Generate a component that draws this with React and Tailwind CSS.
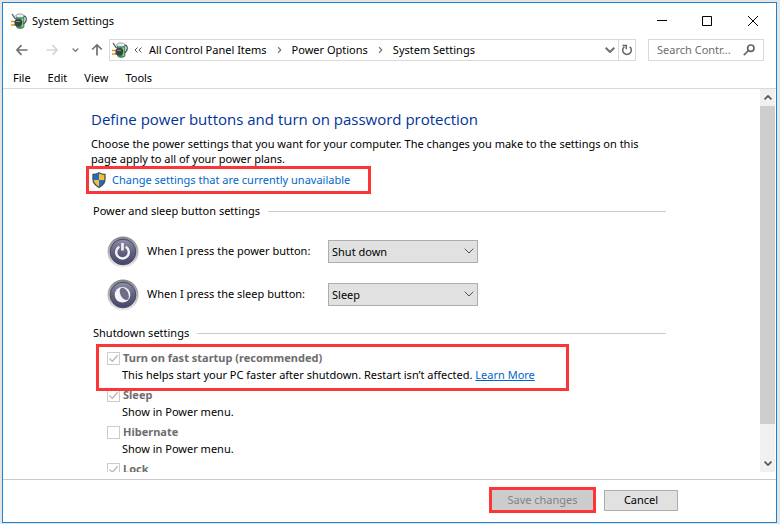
import { useState } from "react";

const menus = ["File", "Edit", "View", "Tools"];
const crumbs = ["All Control Panel Items", "Power Options", "System Settings"];
const actions = ["Do nothing", "Sleep", "Hibernate", "Shut down"];

const shutdownOptions = [
  {
    id: "fast-startup",
    label: "Turn on fast startup (recommended)",
    text: "This helps start your PC faster after shutdown. Restart isn’t affected.",
    checked: true,
    link: "Learn More",
    marked: true,
  },
  { id: "sleep", label: "Sleep", text: "Show in Power menu.", checked: true },
  { id: "hibernate", label: "Hibernate", text: "Show in Power menu.", checked: false },
  { id: "lock", label: "Lock", checked: true },
];

function PowerPlugIcon() {
  return (
    <svg viewBox="0 0 16 16" className="h-4 w-4 shrink-0" aria-hidden="true">
      <path d="M5.500 3v10.500c0 2.500 7.500 2.500 7.500 0V3z" fill="#2fa344" stroke="#4c5660" strokeWidth=".7" />
      <path d="M10.500 5.500h1.800v8l-1.800 1z" fill="#7be077" />
      <path d="M4.500 3.200C5 .2 12.500 .2 13.300 3.200 12.500 5 5.500 5 4.500 3.200z" fill="#e9eef8" stroke="#7c8699" strokeWidth=".8" />
      <path d="M12.800 3.200c3.600-.2 3.200 5.800-.3 7.600" fill="none" stroke="#4a5058" strokeWidth="1.200" />
      <path d="M.8 1.200c1.600.6 1.800 4 4.400 5" fill="none" stroke="#59616b" strokeWidth="1.300" />
      <path d="M0 8.500h4M0 12h4" stroke="#d99a13" strokeWidth="1.500" />
      <path d="M3.500 8L5.500 6.300h4l1.700 2v3L9.200 13.400H5.500L3.500 12z" fill="#3c4047" />
      <path d="M5 8.500h4" stroke="#858b94" />
    </svg>
  );
}

function ArrowIcon({ className }) {
  return (
    <svg viewBox="0 0 12 12" className={className} fill="none" stroke="currentColor" strokeWidth="1.700" aria-hidden="true">
      <path d="M11.500 6H1M5.500 1.200L.9 6l4.600 4.800" />
    </svg>
  );
}

function Chevron({ className }) {
  return (
    <svg viewBox="0 0 10 6" className={className} fill="none" stroke="currentColor" aria-hidden="true">
      <path d="M.7 .7L5 5 9.300 .7" />
    </svg>
  );
}

function ShieldIcon() {
  return (
    <svg viewBox="0 0 14 16" className="h-4 w-3.5 shrink-0" aria-hidden="true">
      <clipPath id="shield">
        <path d="M7 .8C5.200 2 3 2.500 1 2.500V7c0 4 3 6.800 6 8.300C10 13.800 13 11 13 7V2.500C11 2.500 8.800 2 7 .8z" />
      </clipPath>
      <g clipPath="url(#shield)">
        <path d="M0 0h7v8H0z" fill="#1a6fc9" />
        <path d="M7 0h7v8H7z" fill="#fdbd2e" />
        <path d="M0 8h7v8H0z" fill="#fdbd2e" />
        <path d="M7 8h7v8H7z" fill="#1a6fc9" />
      </g>
      <path
        d="M7 .8C5.200 2 3 2.500 1 2.500V7c0 4 3 6.800 6 8.300C10 13.800 13 11 13 7V2.500C11 2.500 8.800 2 7 .8z"
        fill="none"
        stroke="#44505c"
        strokeWidth="1.300"
      />
    </svg>
  );
}

function RoundIcon({ type }) {
  return (
    <svg viewBox="0 0 32 32" className="h-8 w-8 shrink-0" aria-hidden="true">
      <defs>
        <linearGradient id={`${type}-rim`} x2="0" y2="1">
          <stop offset="0" stopColor="#85858a" />
          <stop offset=".5" stopColor="#b4b4b7" />
          <stop offset="1" stopColor="#ececec" />
        </linearGradient>
        <linearGradient id={`${type}-face`} x2="0" y2="1">
          <stop offset="0" stopColor="#8f8fa8" />
          <stop offset=".5" stopColor="#62627f" />
          <stop offset="1" stopColor="#45456a" />
        </linearGradient>
      </defs>
      <circle cx="16" cy="16" r="15.500" fill={`url(#${type}-rim)`} />
      <circle cx="16" cy="16" r="12.800" fill={`url(#${type}-face)`} stroke="#48486a" strokeWidth="1" />
      {type === "power" ? (
        <g fill="none" stroke="#f4f4f8">
          <path d="M12.300 10.800a6.300 6.300 0 1 0 6.400 0" strokeWidth="2.400" />
          <path d="M15.500 7v7.500" strokeWidth="2.600" />
        </g>
      ) : (
        <g>
          <circle cx="15.500" cy="15.800" r="7.800" fill="#f4f4f8" />
          <ellipse cx="17.300" cy="14.900" rx="3.900" ry="6.600" fill="#6d6d88" transform="rotate(-28 17.300 14.900)" />
        </g>
      )}
    </svg>
  );
}

function SectionTitle({ children }) {
  return (
    <div className="ml-0.5 flex h-5 items-center gap-2">
      <h2>{children}</h2>
      <span className="h-px flex-1 bg-[#cbcbcb]" />
    </div>
  );
}

function ButtonSetting({ type, label, initial }) {
  const [value, setValue] = useState(initial);

  return (
    <div className="ml-4 flex h-[43px] items-center">
      <RoundIcon type={type} />
      <label htmlFor={type} className="ml-2 w-[181px] whitespace-nowrap">
        {label}
      </label>
      <div className="relative">
        <select
          id={type}
          value={value}
          onChange={(e) => setValue(e.target.value)}
          className="block h-[23px] w-[150px] appearance-none border border-[#adadad] bg-[#e1e1e1] pl-[3px] leading-5"
        >
          {actions.map((action) => (
            <option key={action}>{action}</option>
          ))}
        </select>
        <Chevron className="pointer-events-none absolute right-1 top-2 h-1.5 w-2.5 text-[#505050]" />
      </div>
    </div>
  );
}

function ShutdownOption({ id, label, text, checked, link, marked }) {
  return (
    <li className="relative h-[37px] pl-4">
      <div className="flex h-5 items-center gap-[3px]">
        <span className="grid h-[13px] w-[13px] place-items-center">
          <input
            id={id}
            type="checkbox"
            defaultChecked={checked}
            disabled
            className="col-start-1 row-start-1 h-[13px] w-[13px] appearance-none border border-[#cccccc] bg-white"
          />
          {checked && (
            <svg viewBox="0 0 11 11" className="col-start-1 row-start-1 h-[11px] w-[11px]" aria-hidden="true">
              <path d="M1.500 5.500l2.800 2.800 5.400-6" fill="none" stroke="#b8b8b8" strokeWidth="1.300" />
            </svg>
          )}
        </span>
        <label htmlFor={id} className="font-bold text-[#6d6d6d]">
          {label}
        </label>
      </div>
      {text && (
        <p className="ml-[15px] whitespace-nowrap leading-[13px]">
          {text}{" "}
          {link && (
            <a href="#learn-more" className="text-[#0066cc] underline">
              {link}
            </a>
          )}
        </p>
      )}
      {marked && (
        <span className="pointer-events-none absolute -bottom-1.5 -top-1 left-[5px] z-10 w-[473px] border-3 border-[#fb3538]" />
      )}
    </li>
  );
}

function TitleBar() {
  return (
    <header className="flex h-9 items-center pl-2">
      <PowerPlugIcon />
      <h1 className="ml-[5px] flex-1">System Settings</h1>
      <div className="flex">
        <button aria-label="Minimize" className="grid h-7 w-[45px] place-items-center">
          <svg viewBox="0 0 10 10" className="h-2.5 w-2.5" stroke="#000">
            <path d="M0 4.500h10" />
          </svg>
        </button>
        <button aria-label="Maximize" className="grid h-7 w-[45px] place-items-center">
          <svg viewBox="0 0 10 10" className="h-2.5 w-2.5" fill="none" stroke="#000">
            <path d="M.5 .5h9v9h-9z" />
          </svg>
        </button>
        <button aria-label="Close" className="grid h-7 w-[47px] place-items-center">
          <svg viewBox="0 0 10 10" className="h-2.5 w-2.5" stroke="#000">
            <path d="M0 0l10 10M10 0L0 10" />
          </svg>
        </button>
      </div>
    </header>
  );
}

function AddressBar() {
  return (
    <div className="flex h-[22px] items-center pl-[13px] pr-3">
      <button aria-label="Back" className="text-[#707070]">
        <ArrowIcon className="h-3 w-3" />
      </button>
      <button aria-label="Forward" className="ml-[18px] text-[#d5d5d5]">
        <ArrowIcon className="h-3 w-3 rotate-180" />
      </button>
      <button aria-label="Recent locations" className="ml-[14px] text-[#808080]">
        <Chevron className="h-1 w-[7px] stroke-2" />
      </button>
      <button aria-label="Up" className="ml-3 text-[#707070]">
        <ArrowIcon className="h-3 w-3 rotate-90" />
      </button>
      <nav className="ml-1.5 flex h-full flex-1 items-center border border-[#d9d9d9] pl-0.5">
        <PowerPlugIcon />
        <svg viewBox="0 0 8 6" className="ml-1.5 h-1.5 w-2" fill="none" stroke="#555" aria-hidden="true">
          <path d="M3.500 .5L1 3l2.500 2.500M7.500 .5L5 3l2.500 2.500" />
        </svg>
        <ol className="ml-[7px] flex flex-1 items-center">
          {crumbs.map((crumb, i) => (
            <li key={crumb} className="flex items-center">
              {i > 0 && <Chevron className="mx-[9px] h-1 w-[7px] -rotate-90 stroke-2 text-[#777]" />}
              <a href="#crumb" className="whitespace-nowrap">
                {crumb}
              </a>
            </li>
          ))}
        </ol>
        <button aria-label="Previous locations" className="mr-[3px] text-[#707070]">
          <Chevron className="h-1.5 w-2.5 stroke-2" />
        </button>
        <button aria-label="Refresh" className="grid h-full w-[17px] place-items-center border-l border-[#d9d9d9]">
          <svg viewBox="0 0 12 12" className="h-3 w-3" fill="none" stroke="#666" strokeWidth="1.500">
            <path d="M3.300 2.800a4.300 4.300 0 1 0 5.400 0" />
            <path d="M1.500 1.500h3.800v3.800" />
          </svg>
        </button>
      </nav>
      <div className="ml-3 flex h-full w-[116px] items-center border border-[#d9d9d9] pl-2 pr-2">
        <input
          type="text"
          aria-label="Search Control Panel"
          placeholder="Search Contr..."
          className="min-w-0 flex-1 bg-transparent outline-none placeholder:text-[#6d6d6d]"
        />
        <svg viewBox="0 0 12 12" className="h-3 w-3 shrink-0" fill="none" stroke="#666" strokeWidth="1.700" aria-hidden="true">
          <circle cx="7.800" cy="4.200" r="3.200" />
          <path d="M5.500 6.500L.8 11.200" />
        </svg>
      </div>
    </div>
  );
}

function ScrollBar() {
  return (
    <div className="mr-px flex w-[15px] shrink-0 flex-col bg-[#f0f0f0] text-[#505050]">
      <button aria-label="Scroll up" className="grid h-[17px] place-items-center">
        <Chevron className="h-[5px] w-2 rotate-180 stroke-2" />
      </button>
      <div className="flex-1">
        <div className="h-[91%] bg-[#cdcdcd]" />
      </div>
      <button aria-label="Scroll down" className="grid h-[17px] place-items-center">
        <Chevron className="h-[5px] w-2 stroke-2" />
      </button>
    </div>
  );
}

export default function App() {
  return (
    <div className="flex h-screen flex-col bg-[#e4e4e4] pb-px pl-0.5 pr-[3px] pt-0.5 font-['Noto_Sans',sans-serif] text-[11px] text-black">
      <div className="flex min-h-0 flex-1 flex-col border border-[#1883d7] bg-white">
        <TitleBar />
        <AddressBar />
        <nav className="flex h-[28px] shrink-0 items-center gap-[17px] border-b border-[#d9d9d9] pl-2.5 pt-2">
          {menus.map((menu) => (
            <button key={menu}>{menu}</button>
          ))}
        </nav>

        <div className="mb-[7px] flex min-h-0 flex-1">
          <main className="flex-1 overflow-hidden pl-[88px] pr-[94px] pt-[18px]">
            <h2 className="font-['Open_Sans',sans-serif] text-[15px] leading-6 text-[#003399]">
              Define power buttons and turn on password protection
            </h2>
            <p className="mt-[5px] leading-[15px]">
              Choose the power settings that you want for your computer. The changes you make to the settings on this
              page apply to all of your power plans.
            </p>
            <div className="-ml-[5px] flex h-7 w-[285px] items-center gap-1.5 border-3 border-[#fb3538] pl-[3px]">
              <ShieldIcon />
              <a href="#unavailable" className="whitespace-nowrap text-[#0066cc]">
                Change settings that are currently unavailable
              </a>
            </div>

            <section className="mt-[7px]">
              <SectionTitle>Power and sleep button settings</SectionTitle>
              <div className="mt-[9px]">
                <ButtonSetting type="power" label="When I press the power button:" initial="Shut down" />
                <ButtonSetting type="sleep-button" label="When I press the sleep button:" initial="Sleep" />
              </div>
            </section>

            <section className="mt-[7px]">
              <SectionTitle>Shutdown settings</SectionTitle>
              <ul className="mt-[5px]">
                {shutdownOptions.map((option) => (
                  <ShutdownOption key={option.id} {...option} />
                ))}
              </ul>
            </section>
          </main>
          <ScrollBar />
        </div>

        <footer className="flex h-[43px] shrink-0 items-center justify-end gap-2 border-t border-[#cbcbcb] pb-0.5 pr-[98px]">
          <button disabled className="h-[26px] w-[107px] border-3 border-[#fb3538] bg-[#cccccc] text-[#838383]">
            Save changes
          </button>
          <button className="h-[21px] w-[74px] border border-[#adadad] bg-[#e1e1e1]">Cancel</button>
        </footer>
      </div>
    </div>
  );
}
